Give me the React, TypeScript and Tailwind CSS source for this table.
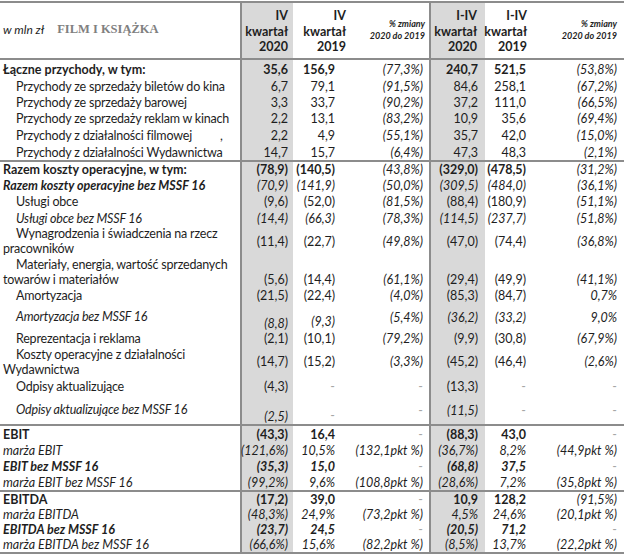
import type { ReactNode } from 'react';

type Row = {
  label: ReactNode;
  lc?: string;
  h: string;
  n?: string;
  vals: string[];
  al?: string[];
};

const SHADE = 'bg-[#d9d9d9]';
const LINE = 'border-[#8c8c8c]';
const GRID = 'grid grid-cols-[242px_51px_54px_84px_54px_46px_1fr]';

const COLS = [
  `${SHADE} pr-[5px]`,
  'pr-[12px]',
  `pr-[6px] border-r-2 ${LINE}`,
  `${SHADE} pr-[7px]`,
  'pr-[5px]',
  'pr-[7px]',
];

const IND = 'indent-[13px] tracking-[-0.2px]';

const TOP: Row[] = [
  { label: 'Łączne przychody, w tym:', lc: 'font-bold', n: 'font-bold', h: 'h-[18px]', vals: ['35,6', '156,9', '(77,3%)', '240,7', '521,5', '(53,8%)'] },
  { label: 'Przychody ze sprzedaży biletów do kina', lc: IND, h: 'h-[16px]', vals: ['6,7', '79,1', '(91,5%)', '84,6', '258,1', '(67,2%)'] },
  { label: 'Przychody ze sprzedaży barowej', lc: IND, h: 'h-[16px]', vals: ['3,3', '33,7', '(90,2%)', '37,2', '111,0', '(66,5%)'] },
  { label: 'Przychody ze sprzedaży reklam w kinach', lc: IND, h: 'h-[16px]', vals: ['2,2', '13,1', '(83,2%)', '10,9', '35,6', '(69,4%)'] },
  {
    label: (
      <>
        Przychody z działalności filmowej<span className="ml-[28px]">,</span>
      </>
    ),
    lc: IND,
    h: 'h-[18px]',
    vals: ['2,2', '4,9', '(55,1%)', '35,7', '42,0', '(15,0%)'],
  },
  { label: 'Przychody z działalności Wydawnictwa', lc: IND, h: 'h-[16px]', vals: ['14,7', '15,7', '(6,4%)', '47,3', '48,3', '(2,1%)'] },
];

const COSTS: Row[] = [
  { label: 'Razem koszty operacyjne, w tym:', lc: 'font-bold', n: 'font-bold', h: 'h-[15px]', vals: ['(78,9)', '(140,5)', '(43,8%)', '(329,0)', '(478,5)', '(31,2%)'] },
  { label: 'Razem koszty operacyjne bez MSSF 16', lc: 'font-bold italic', n: 'italic', h: 'h-[16px]', vals: ['(70,9)', '(141,9)', '(50,0%)', '(309,5)', '(484,0)', '(36,1%)'] },
  { label: 'Usługi obce', lc: IND, h: 'h-[17px]', vals: ['(9,6)', '(52,0)', '(81,5%)', '(88,4)', '(180,9)', '(51,1%)'] },
  { label: 'Usługi obce bez MSSF 16', lc: `${IND} italic`, n: 'italic', h: 'h-[16px]', vals: ['(14,4)', '(66,3)', '(78,3%)', '(114,5)', '(237,7)', '(51,8%)'] },
  {
    label: (
      <>
        Wynagrodzenia i świadczenia na rzecz
        <br />
        pracowników
      </>
    ),
    lc: IND,
    h: 'h-[30px]',
    vals: ['(11,4)', '(22,7)', '(49,8%)', '(47,0)', '(74,4)', '(36,8%)'],
  },
  {
    label: (
      <>
        Materiały, energia, wartość sprzedanych
        <br />
        towarów i materiałów
      </>
    ),
    lc: IND,
    h: 'h-[31px]',
    vals: ['(5,6)', '(14,4)', '(61,1%)', '(29,4)', '(49,9)', '(41,1%)'],
    al: ['items-center', 'items-end', 'items-end', 'items-end', 'items-end', 'items-end', 'items-end'],
  },
  { label: 'Amortyzacja', lc: IND, h: 'h-[17px]', vals: ['(21,5)', '(22,4)', '(4,0%)', '(85,3)', '(84,7)', '0,7%'] },
  {
    label: 'Amortyzacja bez MSSF 16',
    lc: `${IND} italic`,
    n: 'italic',
    h: 'h-[27px]',
    vals: ['(8,8)', '(9,3)', '(5,4%)', '(36,2)', '(33,2)', '9,0%'],
    al: ['items-start pt-[5px]', 'items-start pt-[12px]', 'items-start pt-[10px]', 'items-start pt-[6px]', 'items-start pt-[6px]', 'items-start pt-[6px]', 'items-start pt-[6px]'],
  },
  { label: 'Reprezentacja i reklama', lc: IND, h: 'h-[15px]', vals: ['(2,1)', '(10,1)', '(79,2%)', '(9,9)', '(30,8)', '(67,9%)'] },
  {
    label: (
      <>
        Koszty operacyjne z działalności
        <br />
        Wydawnictwa
      </>
    ),
    lc: IND,
    h: 'h-[31px]',
    vals: ['(14,7)', '(15,2)', '(3,3%)', '(45,2)', '(46,4)', '(2,6%)'],
  },
  { label: 'Odpisy aktualizujące', lc: IND, h: 'h-[18px]', vals: ['(4,3)', '-', '-', '(13,3)', '-', '-'] },
  {
    label: 'Odpisy aktualizujące bez MSSF 16',
    lc: `${IND} italic`,
    n: 'italic',
    h: 'h-[29px]',
    vals: ['(2,5)', '-', '-', '(11,5)', '-', '-'],
    al: ['items-start pt-[7px]', 'items-start pt-[14px]', 'items-start pt-[13px]', 'items-start pt-[8px]', 'items-start pt-[8px]', 'items-start pt-[8px]', 'items-start pt-[8px]'],
  },
];

const EBIT: Row[] = [
  { label: 'EBIT', lc: 'font-bold', n: 'font-bold', h: 'h-[16px]', vals: ['(43,3)', '16,4', '-', '(88,3)', '43,0', '-'] },
  { label: 'marża EBIT', lc: 'italic', n: 'italic', h: 'h-[16px]', vals: ['(121,6%)', '10,5%', '(132,1pkt %)', '(36,7%)', '8,2%', '(44,9pkt %)'] },
  { label: 'EBIT bez MSSF 16', lc: 'font-bold italic', n: 'font-bold italic', h: 'h-[16px]', vals: ['(35,3)', '15,0', '-', '(68,8)', '37,5', '-'] },
  { label: 'marża EBIT bez MSSF 16', lc: 'italic', n: 'italic', h: 'h-[16px]', vals: ['(99,2%)', '9,6%', '(108,8pkt %)', '(28,6%)', '7,2%', '(35,8pkt %)'] },
];

const EBITDA: Row[] = [
  { label: 'EBITDA', lc: 'font-bold', n: 'font-bold', h: 'h-[15px]', vals: ['(17,2)', '39,0', '-', '10,9', '128,2', '(91,5%)'] },
  { label: 'marża EBITDA', lc: 'italic', n: 'italic', h: 'h-[15px]', vals: ['(48,3%)', '24,9%', '(73,2pkt %)', '4,5%', '24,6%', '(20,1pkt %)'] },
  { label: 'EBITDA bez MSSF 16', lc: 'font-bold italic', n: 'font-bold italic', h: 'h-[15px]', vals: ['(23,7)', '24,5', '-', '(20,5)', '71,2', '-'] },
  { label: 'marża EBITDA bez MSSF 16', lc: 'italic', n: 'italic', h: 'h-[15px]', vals: ['(66,6%)', '15,6%', '(82,2pkt %)', '(8,5%)', '13,7%', '(22,2pkt %)'] },
];

function Rule() {
  return <div className="h-[2px] bg-[#8c8c8c]" />;
}

function TableRow({ row }: { row: Row }) {
  const al = row.al ?? [];
  return (
    <div className={`${GRID} ${row.h}`}>
      <div className={`flex border-r-2 ${LINE} pl-[3px] ${al[0] ?? 'items-center'}`}>
        <div className={`whitespace-nowrap ${row.lc ?? ''}`}>{row.label}</div>
      </div>
      {row.vals.map((v, i) => {
        const pct = i === 2 || i === 5;
        const cls = v === '-' ? 'text-[#a6a6a6]' : pct ? 'italic' : row.n ?? '';
        return (
          <div key={i} className={`flex justify-end whitespace-nowrap ${COLS[i]} ${al[i + 1] ?? 'items-center'}`}>
            <span className={cls}>{v}</span>
          </div>
        );
      })}
    </div>
  );
}

function HeadCell({ a, b, c, cls }: { a: string; b: string; c: string; cls: string }) {
  return (
    <div className={`flex flex-col items-end pt-[5px] font-bold leading-[15.5px] ${cls}`}>
      <span>{a}</span>
      <span>{b}</span>
      <span>{c}</span>
    </div>
  );
}

function PctHead({ cls }: { cls: string }) {
  return (
    <div className={`flex flex-col items-end justify-center pb-[1px] text-[9px] font-bold italic leading-[12px] ${cls}`}>
      <span>% zmiany</span>
      <span>2020 do 2019</span>
    </div>
  );
}

export default function App() {
  return (
    <div className="w-[626px] h-[557px] bg-white pt-[1px] font-['Lato',sans-serif] text-[12.5px] leading-[15px] text-[#1e1e1e]">
      <div className="w-[624px]">
        <Rule />
        <div className={`${GRID} h-[55px]`}>
          <div className={`flex items-center border-r-2 ${LINE} pl-[3px] pb-[2px]`}>
            <span className="text-[12px] italic">w mln zł</span>
            <span className="ml-[13px] font-['Liberation_Serif',serif] text-[12.5px] font-bold text-[#808080]">
              FILM I KSIĄŻKA
            </span>
          </div>
          <HeadCell a="IV" b="kwartał" c="2020" cls={`${SHADE} pr-[5px]`} />
          <HeadCell a="IV" b="kwartał" c="2019" cls="pr-[1px]" />
          <PctHead cls={`pr-[4px] border-r-2 ${LINE}`} />
          <HeadCell a="I-IV" b="kwartał" c="2020" cls={`${SHADE} pr-[8px]`} />
          <HeadCell a="I-IV" b="kwartał" c="2019" cls="pr-[4px]" />
          <PctHead cls="pr-[7px]" />
        </div>
        <Rule />
        {TOP.map((r, i) => (
          <TableRow key={i} row={r} />
        ))}
        <Rule />
        {COSTS.map((r, i) => (
          <TableRow key={i} row={r} />
        ))}
        <Rule />
        {EBIT.map((r, i) => (
          <TableRow key={i} row={r} />
        ))}
        <Rule />
        {EBITDA.map((r, i) => (
          <TableRow key={i} row={r} />
        ))}
        <Rule />
      </div>
    </div>
  );
}
